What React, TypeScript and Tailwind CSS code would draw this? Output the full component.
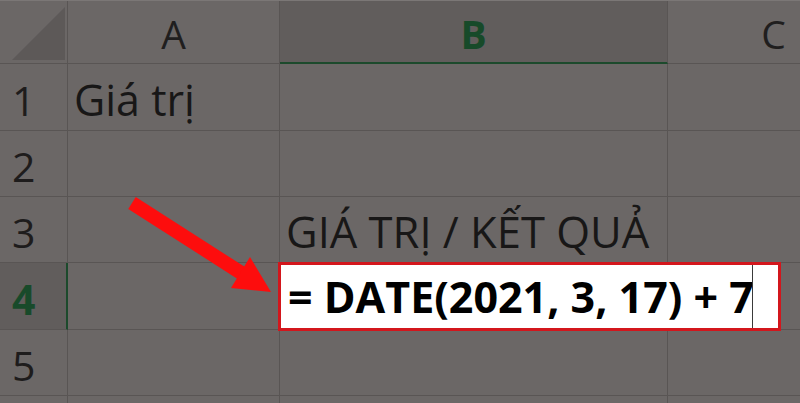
const font = "font-['Open_Sans','Noto_Sans',sans-serif]";

function RowHead({ n, active }: { n: number; active?: boolean }) {
  return (
    <div
      className={
        "flex items-end pl-[12px] pb-[9px] border-b border-[#595554] " +
        (active
          ? "bg-[#615d5c] border-r-2 border-r-[#1c4a2c] text-[#184a2a] font-bold"
          : "border-r border-r-[#595554] text-[#1e1c1c]")
      }
    >
      {n < 6 && <span className="text-[41px] leading-none">{n}</span>}
    </div>
  );
}

function Cell({ children, size = "text-[43px]" }: { children?: React.ReactNode; size?: string }) {
  return (
    <div className="flex items-end pl-[6px] pb-[9px] border-r border-b border-[#595554] text-[#181717] whitespace-nowrap">
      {children && <span className={size + " leading-none"}>{children}</span>}
    </div>
  );
}

export default function App() {
  const rows = [1, 2, 3, 4, 5, 6];
  return (
    <div className={"relative w-[800px] h-[403px] overflow-hidden bg-[#6b6766] " + font}>
      <div className="grid grid-cols-[68px_212px_388px_212px] grid-rows-[63px_67px_66px_66px_67px_66px_66px] border-t border-[#7b7776]">
        {/* header row */}
        <div className="relative border-r border-b border-[#595554]">
          <svg className="absolute inset-0" width="68" height="62" viewBox="0 0 68 62">
            <polygon points="12,59 65,59 65,6" fill="#5d5958" />
          </svg>
        </div>
        <div className="flex items-end justify-center pb-[10px] border-r border-b border-[#595554] text-[#201e1e]">
          <span className="text-[39px] leading-none">A</span>
        </div>
        <div className="flex items-end justify-center pb-[9px] bg-[#615d5c] border-r border-r-[#595554] border-b-2 border-b-[#1c4a2c] text-[#174a29] font-bold">
          <span className="text-[39px] leading-none">B</span>
        </div>
        <div className="flex items-end justify-center pb-[10px] border-r border-b border-[#595554] text-[#201e1e]">
          <span className="text-[39px] leading-none">C</span>
        </div>

        {rows.map((r) => (
          <div key={r} className="contents">
            <RowHead n={r} active={r === 4} />
            <Cell>{r === 1 ? "Giá trị" : null}</Cell>
            <Cell size="text-[43.5px]">{r === 3 ? "GIÁ TRỊ / KẾT QUẢ" : null}</Cell>
            <Cell />
          </div>
        ))}
      </div>

      {/* editing cell */}
      <div className="absolute left-[278px] top-[262px] w-[503px] h-[69px] border-[3px] border-[#d3161c] bg-white flex items-center pl-[7px]">
        <span className="text-[43px] leading-none font-bold text-black whitespace-nowrap">
          = DATE(2021, 3, 17) + 7
        </span>
        <div className="absolute left-[471px] top-0 bottom-0 w-px bg-[#3a3a3a]" />
      </div>

      {/* arrow */}
      <svg className="absolute inset-0 pointer-events-none" width="800" height="403" viewBox="0 0 800 403">
        <line x1="132" y1="203" x2="246" y2="276" stroke="#fd0d0d" strokeWidth="14" />
        <polygon points="250,257 231,288 271,292" fill="#fd0d0d" />
      </svg>
    </div>
  );
}
